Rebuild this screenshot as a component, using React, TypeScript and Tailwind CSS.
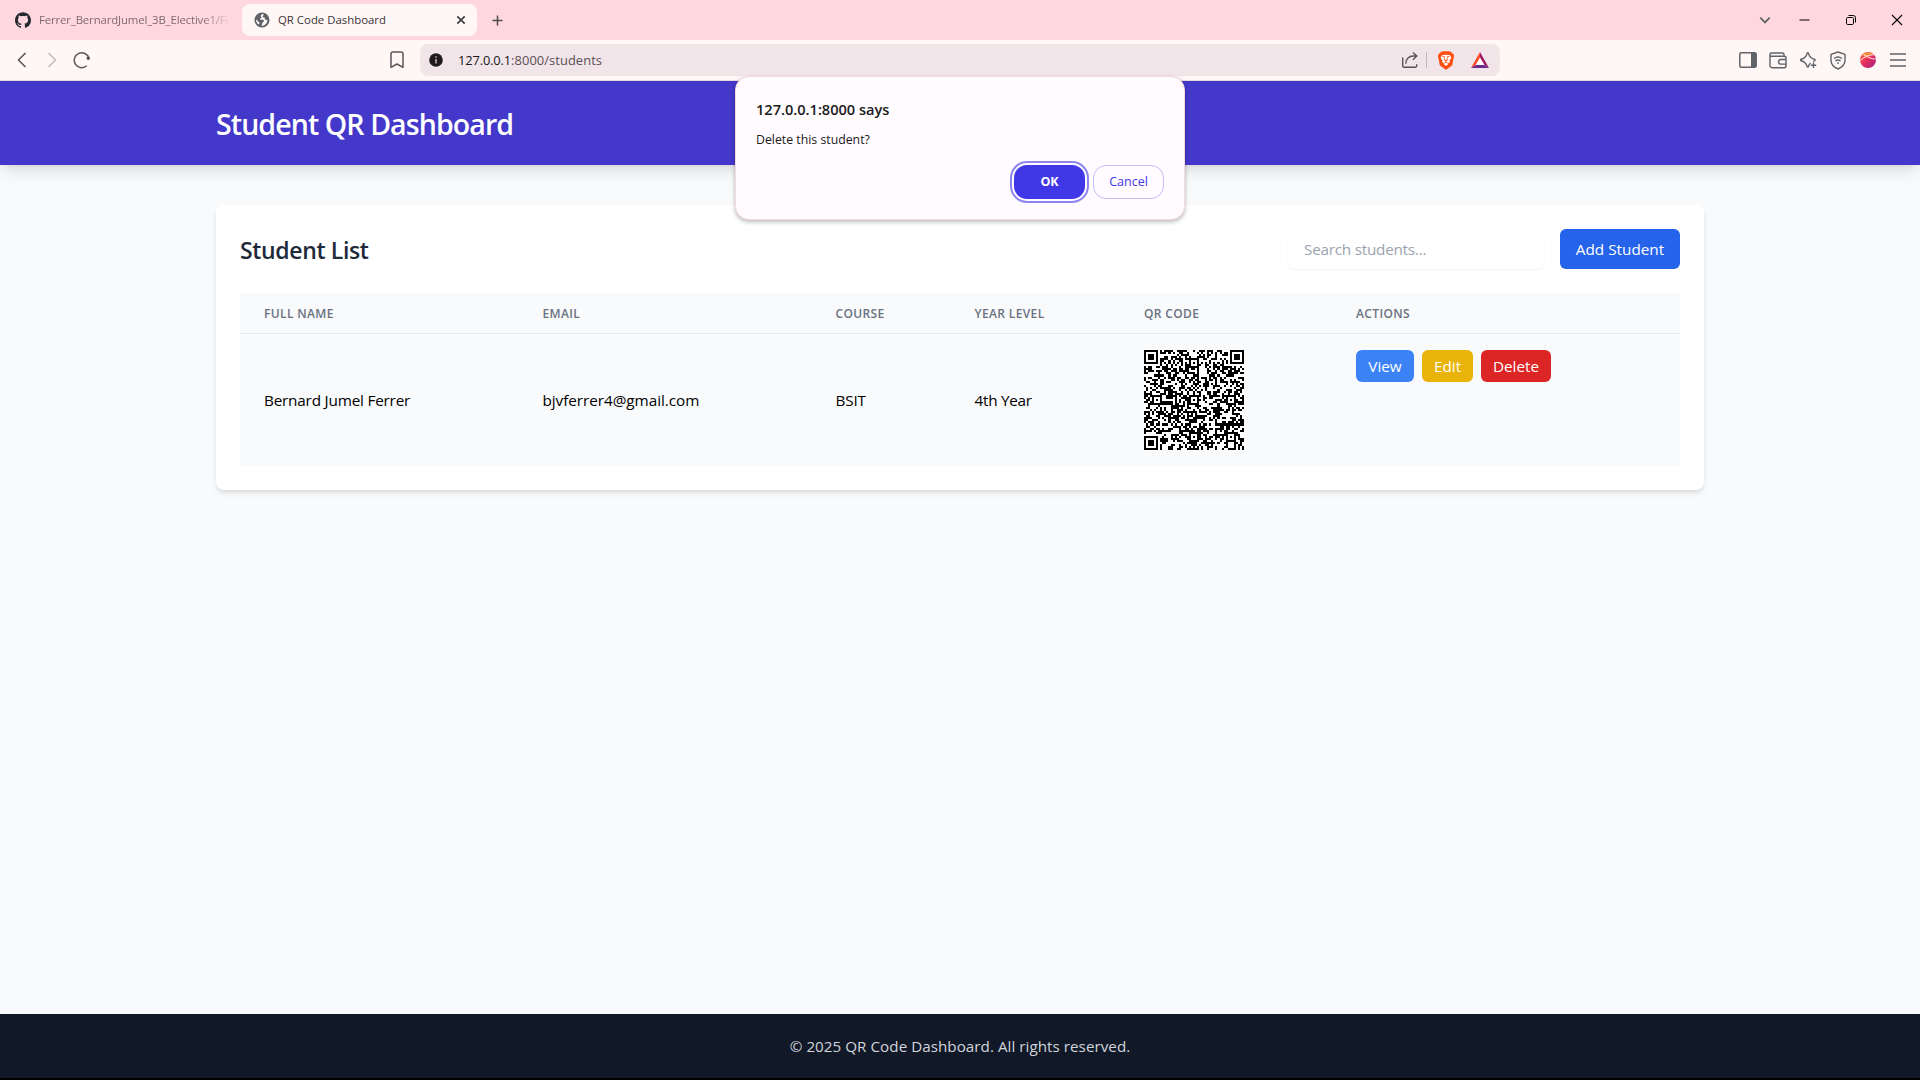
import React from 'react';
import { SiGithub, SiBrave } from 'react-icons/si';

const MODULES = 49;

function inFinder(x: number, y: number): boolean | null {
  const corners = [
    [0, 0],
    [MODULES - 7, 0],
    [0, MODULES - 7],
  ];
  for (const [cx, cy] of corners) {
    const dx = x - cx;
    const dy = y - cy;
    if (dx >= -1 && dx <= 7 && dy >= -1 && dy <= 7) {
      const ring = Math.max(Math.abs(dx - 3), Math.abs(dy - 3));
      return ring === 3 || ring <= 1;
    }
  }
  return null;
}

function inAlignment(x: number, y: number): boolean | null {
  for (const cx of [6, 24, 42]) {
    for (const cy of [6, 24, 42]) {
      if ((cx === 6 && cy !== 24) || (cy === 6 && cx === 42)) continue;
      const ring = Math.max(Math.abs(x - cx), Math.abs(y - cy));
      if (ring <= 2) return ring !== 1;
    }
  }
  return null;
}

function qrPath() {
  let seed = 20257;
  let d = '';
  for (let y = 0; y < MODULES; y++) {
    for (let x = 0; x < MODULES; x++) {
      seed = (seed * 1103515245 + 12345) % 2147483648;
      const data = (seed >> 12) % 100 < 51;
      let dark = inFinder(x, y);
      if (dark === null) dark = inAlignment(x, y);
      if (dark === null && (x === 6 || y === 6)) dark = (x + y) % 2 === 0;
      if (dark === null) dark = data;
      if (dark) d += `M${x} ${y}h1v1h-1z`;
    }
  }
  return d;
}

const QR_PATH = qrPath();

function QrCode() {
  return (
    <svg width="100" height="100" viewBox="0 0 49 49" shapeRendering="crispEdges" className="block">
      <rect width="49" height="49" fill="#fff" />
      <path d={QR_PATH} fill="#000" />
    </svg>
  );
}

function TabStrip() {
  return (
    <div className="flex h-10 items-center bg-[#ffd7df] text-[#5f6368]">
      <div className="ml-[15px] flex w-[227px] items-center">
        <SiGithub className="size-4 shrink-0 text-[#24292f]" />
        <span className="ml-2 w-[192px] whitespace-nowrap text-[11.4px] tracking-[-0.14px] text-[#806a70] [mask-image:linear-gradient(to_right,#000_85%,transparent)]">
          Ferrer_BernardJumel_3B_Elective1/Fi
        </span>
      </div>
      <div className="flex h-8 w-[235px] items-center rounded-lg bg-[#fff7f5] pl-3 pr-[11px]">
        <svg width="16" height="16" viewBox="0 0 16 16">
          <circle cx="8" cy="8" r="7.5" fill="#5f6368" />
          <path
            d="M8.300 2.100c-.9.500-1.600 1.100-1.500 1.900.1.700.9.900.7 1.600-.2.800-1.400.6-1.500 1.400-.1.900 1.900.6 3 .8 1.100.3 1.100 1.300.6 2-.4.600-1.300.7-1.400 1.500 0 .9-.2 1.700-1 2.500 1.700.2 3.700-.6 4.900-2 .9-1.100 1.400-2.500 1.300-4-.8.300-1.700.3-2.200-.3-.5-.7-.1-1.600-1-1.900-.8-.2-1.500-.4-1.500-1.200 0-.9.900-1 1.300-1.600-.5-.4-1.100-.6-1.700-.7zM2 7.600c0 2 .9 3.900 2.600 5 .5-.5.900-1 .8-1.700-.1-.8-.9-1-1.300-1.600C3.600 8.600 2.800 8.100 2 7.600z"
            fill="#fff7f5"
          />
        </svg>
        <span className="ml-2 flex-1 whitespace-nowrap text-[11.4px] text-[#3b3335]">QR Code Dashboard</span>
        <svg width="10" height="10" viewBox="0 0 10 10" stroke="#3c4043" strokeWidth="1.7">
          <path d="M1.300 1.300l7.400 7.400M8.700 1.300L1.300 8.700" />
        </svg>
      </div>
      <svg className="ml-[15px]" width="11" height="11" viewBox="0 0 11 11" stroke="#4d4a4c" strokeWidth="1.500">
        <path d="M5.500 .5v10M.5 5.500h10" />
      </svg>
      <div className="ml-auto mr-[17px] flex items-center">
        <svg className="mr-[28px]" width="12" height="12" viewBox="0 0 12 12" fill="none" stroke="#5f6368" strokeWidth="1.800">
          <path d="M1.300 3.700L6 8.400l4.700-4.700" />
        </svg>
        <svg className="mr-[35px]" width="11" height="11" viewBox="0 0 11 11" stroke="#000">
          <path d="M.5 5h10" />
        </svg>
        <svg className="mr-[34px]" width="12" height="12" viewBox="0 0 12 12" fill="none" stroke="#000">
          <rect x="1.500" y="3.500" width="7" height="7" rx="1.200" />
          <path d="M3.500 1.500h4.800a2.200 2.200 0 0 1 2.200 2.200v4.800" />
        </svg>
        <svg width="12" height="12" viewBox="0 0 12 12" stroke="#000" strokeWidth="1.100">
          <path d="M1 1l10 10M11 1L1 11" />
        </svg>
      </div>
    </div>
  );
}

function AddressBar() {
  return (
    <div className="flex h-8 w-[1080px] items-center rounded-lg bg-[#f1e5e9] pl-[9px] pr-[11px]">
      <svg width="14" height="14" viewBox="0 0 14 14">
        <circle cx="7" cy="7" r="6.800" fill="#201a1b" />
        <path d="M7 3.300v1.500M7 6v4.600" stroke="#cdbfc3" strokeWidth="1.400" />
      </svg>
      <span className="ml-[15px] flex-1 whitespace-nowrap pt-px text-[12.9px] text-[#5d4f54]">
        <span className="tracking-[-0.15px] text-[#201a1b]">127.0.0.1</span>
        <span className="tracking-[0.07px]">:8000/students</span>
      </span>
      <svg width="18" height="18" viewBox="0 0 18 18" fill="none" stroke="#5a5256" strokeWidth="1.400">
        <path d="M1.700 6.500v8.300a1.500 1.500 0 0 0 1.500 1.500h11a1.500 1.500 0 0 0 1.500-1.500v-1.500" />
        <path d="M4.800 12.800C4.800 8 8 5 12.500 5h3M12 1.500L15.800 5 12 8.700" />
      </svg>
      <div className="ml-[7px] h-4 w-px bg-[#c3b8bc]" />
      <span className="relative ml-[10px] flex h-[19px] w-[18px] items-center justify-center">
        <svg className="absolute inset-0" width="18" height="19" viewBox="0 0 18 19">
          <path d="M4.500 .5h9l3.500 3.500-1.700 10L9 18.800 2.700 14 1 4z" fill="#ff4f12" />
          <path d="M5 4.200l4-.7 4 .7 1.500 2.500-1.800 4.300 .3 1.500L9 15.700l-4-3.200.3-1.500L3.500 6.700z" fill="#fff" />
        </svg>
        <SiBrave className="relative size-[19px] text-[#ff4f12]" />
      </span>
      <svg className="ml-4" width="18" height="16" viewBox="0 0 18 16">
        <path d="M9 0L0 16 5 13 9 6z" fill="#ff4724" />
        <path d="M9 0l9 16-5-3L9 6z" fill="#9e1f63" />
        <path d="M0 16h18l-5-3H5z" fill="#662d91" />
        <path d="M9 5.400L4.600 13h8.800z" fill="#fff" />
      </svg>
    </div>
  );
}

function Toolbar() {
  return (
    <div className="flex h-[41px] items-center border-b border-[#e6dbdd] bg-[#fff7f5]">
      <svg className="ml-[17px]" width="10" height="16" viewBox="0 0 10 16" fill="none" stroke="#5a5659" strokeWidth="1.600">
        <path d="M8.500 1L1.500 8l7 7" />
      </svg>
      <svg className="ml-5" width="10" height="16" viewBox="0 0 10 16" fill="none" stroke="#c4bebf" strokeWidth="1.600">
        <path d="M1.500 1l7 7-7 7" />
      </svg>
      <svg className="ml-4" width="18" height="18" viewBox="0 0 18 18" fill="none" stroke="#5a5659" strokeWidth="1.500">
        <path d="M13.800 14.800A7.500 7.500 0 1 1 16 7.300" />
        <circle cx="15.300" cy="7.300" r="1.700" fill="#5a5659" stroke="none" />
      </svg>
      <svg className="ml-[299px]" width="14" height="18" viewBox="0 0 14 18" fill="none" stroke="#5a5659" strokeWidth="1.500" strokeLinejoin="round">
        <path d="M1 3a2 2 0 0 1 2-2h8a2 2 0 0 1 2 2v13.300L7 13l-6 3.300z" />
      </svg>
      <div className="ml-4">
        <AddressBar />
      </div>
      <div className="ml-auto mr-[14px] flex items-center gap-3">
        <svg className="-ml-px mr-px" width="18" height="16" viewBox="0 0 18 16" fill="none" stroke="#5f6368" strokeWidth="1.500">
          <rect x=".8" y=".8" width="16.400" height="14.400" rx="1.500" />
          <path d="M12 1h5v14h-5z" fill="#5f6368" stroke="none" />
        </svg>
        <svg className="-ml-px mr-px" width="18" height="17" viewBox="0 0 18 17" fill="none" stroke="#5f6368" strokeWidth="1.400">
          <path d="M15 4.300V2.600A1.600 1.600 0 0 0 13.400 1H2.600a1.600 1.600 0 0 0 0 3.300h12.800A1.600 1.600 0 0 1 17 5.900v8a1.800 1.800 0 0 1-1.800 1.800H3A2 2 0 0 1 1 13.700V2.600" />
          <path d="M17 7.500h-5.200a2.300 2.300 0 0 0 0 4.600H17" />
        </svg>
        <svg className="-ml-px mr-px" width="18" height="18" viewBox="0 0 18 18" fill="none" stroke="#5f6368" strokeWidth="1.400" strokeLinejoin="round">
          <path d="M11.500 12.200c-1 .6-1.600 1.800-2 3.300-.2.800-1.200.8-1.400 0-.9-3.400-2.300-4.800-6-5.700-.8-.2-.8-1.300 0-1.500 3.700-.9 5.100-2.300 6-6 .2-.8 1.200-.8 1.400 0 .9 3.700 2.300 5.100 6 6 .8.2.8 1.200 0 1.500l-1.500.500" />
          <path d="M14.500 11.500v5.500M11.800 14.300h5.400" />
        </svg>
        <svg className="-ml-px mr-px" width="18" height="19" viewBox="0 0 18 19" fill="none" stroke="#5f6368" strokeWidth="1.400" strokeLinejoin="round">
          <path d="M9 1l7 2.400v6.100c0 4-3 6.700-7 8.500-4-1.800-7-4.500-7-8.500V3.400z" />
          <path d="M5 7.500c2.400-1.800 5.600-1.800 8 0M6.400 9.900c1.600-1.200 3.600-1.200 5.200 0M9 11.300v1.600" />
        </svg>
        <svg className="-ml-px mr-px" width="18" height="18" viewBox="0 0 18 18">
          <defs>
            <linearGradient id="leo" x1="0" y1="0" x2="1" y2="1">
              <stop offset="0" stopColor="#fa7250" />
              <stop offset=".45" stopColor="#e8325a" />
              <stop offset="1" stopColor="#a31b8a" />
            </linearGradient>
          </defs>
          <circle cx="9" cy="9" r="8" fill="url(#leo)" />
          <path d="M2.600 4.200A8 8 0 0 1 14.500 3.200L10 4.500 6.500 6z" fill="#f58a3c" />
          <path d="M1.200 9.500C5 6 10 3.700 15 3.700M4.500 3.200c3 2.600 7.500 4.600 12.300 5" fill="none" stroke="#ffe9e4" strokeWidth="1" />
        </svg>
        <svg width="16" height="14" viewBox="0 0 16 14" stroke="#5f6368" strokeWidth="1.500">
          <path d="M0 1h16M0 7h16M0 13h16" />
        </svg>
      </div>
    </div>
  );
}

function Dialog() {
  return (
    <div className="absolute left-[735px] top-[76px] h-[144px] w-[450px] rounded-[14px] border border-[#f3dadf] bg-[#fffbff] px-5 pt-[21px] shadow-[0_2px_4px_rgba(0,0,0,0.28)]">
      <div className="text-[14.6px] font-semibold leading-[22px] tracking-[-0.02px] text-[#201a1b]">127.0.0.1:8000 says</div>
      <div className="mt-[10px] text-[12.3px] leading-5 text-[#201a1b]">Delete this student?</div>
      <div className="mt-[15px] flex justify-end gap-2">
        <button className="h-[34px] w-[71px] rounded-[13px] bg-[#4038e6] pt-px text-[12.5px] font-bold text-white outline-2 outline-offset-2 outline-[#8d86f0]">
          OK
        </button>
        <button className="h-[34px] w-[71px] rounded-[13px] border border-[#c2befa] pt-px text-[12.5px] font-medium text-[#4038e6]">
          Cancel
        </button>
      </div>
    </div>
  );
}

function StudentTable() {
  const head = 'px-6 pt-[13px] pb-[11px] text-xs font-semibold uppercase tracking-[0.36px] text-gray-500';
  return (
    <div className="mt-6 bg-[#f9fafc]">
      <div className="grid grid-cols-[278.5px_293px_139px_169.5px_212px_1fr] border-b border-gray-200">
        <div className={head}>Full Name</div>
        <div className={head}>Email</div>
        <div className={head}>Course</div>
        <div className={head}>Year Level</div>
        <div className={head}>QR Code</div>
        <div className={head}>Actions</div>
      </div>
      <div className="grid grid-cols-[278.5px_293px_139px_169.5px_212px_1fr] items-center text-[15.3px] text-black">
        <div className="px-6 tracking-[-0.2px]">Bernard Jumel Ferrer</div>
        <div className="px-6 tracking-[-0.05px]">bjvferrer4@gmail.com</div>
        <div className="px-6 tracking-[-0.15px]">BSIT</div>
        <div className="px-6 tracking-[-0.28px]">4th Year</div>
        <div className="px-6 py-4">
          <QrCode />
        </div>
        <div className="flex gap-2 self-start px-6 py-4 text-[15.3px] text-white">
          <button className="h-8 w-[58px] rounded-md bg-[#3b82f6]">View</button>
          <button className="h-8 w-[51px] rounded-md bg-[#eab308]">Edit</button>
          <button className="h-8 w-[70px] rounded-md bg-[#dc2626]">Delete</button>
        </div>
      </div>
    </div>
  );
}

export default function App() {
  return (
    <div className="relative flex h-[1080px] w-[1920px] flex-col overflow-hidden bg-[#f9fafc] font-['Open_Sans',sans-serif]">
      <TabStrip />
      <Toolbar />
      <header className="h-[84px] shrink-0 bg-[#4338ca] px-[216px] pt-[25px] shadow-lg">
        <h1 className="whitespace-nowrap text-[28.5px] font-semibold leading-9 tracking-[-0.9px] text-white">Student QR Dashboard</h1>
      </header>
      <main className="flex-1 px-[216px] pt-10">
        <section className="h-[285px] rounded-lg bg-white p-6 shadow-md">
          <div className="flex items-center">
            <h2 className="flex-1 pt-0.5 text-[23px] font-semibold leading-8 tracking-[-0.35px] text-gray-800">Student List</h2>
            <div className="flex h-10 w-64 items-center rounded-md px-4 text-[15.3px] tracking-[-0.25px] text-[#9ca3af] shadow-[0_1px_2px_0_rgba(0,0,0,0.05)]">
              Search students...
            </div>
            <button className="ml-4 h-10 w-[120px] rounded-md bg-[#2563eb] text-[15.3px] text-white">Add Student</button>
          </div>
          <StudentTable />
        </section>
      </main>
      <footer className="flex h-16 items-center justify-center bg-[#111827] text-[15.2px] tracking-[0.04px] text-gray-300">
        © 2025 QR Code Dashboard. All rights reserved.
      </footer>
      <div className="h-0.5 bg-black" />
      <Dialog />
    </div>
  );
}
